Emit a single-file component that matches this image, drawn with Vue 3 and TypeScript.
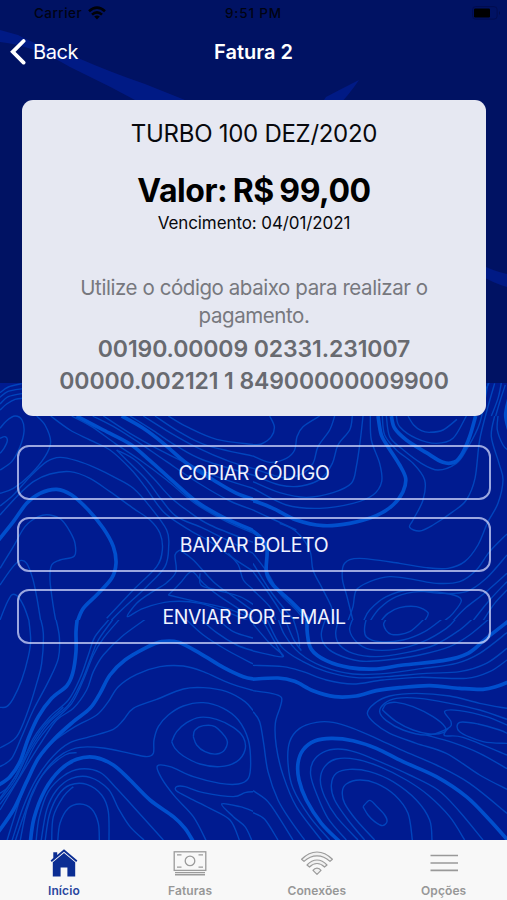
<script setup lang="ts">
interface Tile { x: number; y: number; top: number; w: number; thin: string[]; thick: string[] }

/* Contour lines of the topographic backdrop, as point lists on a 3x grid. */
const tiles: Tile[] = [
  {
    x: 0, y: 400, top: -51, w: 759,
    thin: [
      '0,-22 25,-39 65,-49', '0,-8 24,-26 68,-34', '0,12 25,-10 70,-20', '0,30 20,12 45,-2 75,-6',
      '0,85 20,62 45,48 66,60 72,95 60,140 35,185 0,210',
      '0,115 15,110 22,122 12,145 0,160',
      '110,48 135,75 152,125 135,170 90,225 40,265 0,280',
      '152,48 210,90 270,120 330,150 390,205 435,260 490,335 560,385 630,425 700,475 762,515',
      '350,150 405,180 460,235 510,290 560,330 630,375 762,428',
      '350,150 390,190 440,240 485,300 530,350 610,385 700,430 762,461',
      '0,318 40,285 90,230 140,185 180,172 230,182 290,205 350,235 400,265 450,320 500,390 506,440 495,500 440,560 370,625 330,665',
      '0,345 50,290 100,245 150,222 210,215 270,235 330,275 400,325 450,360 480,400 487,450 470,500 400,570 320,655',
      '0,505 40,440 75,380 115,350 150,345 185,360 210,395 225,430 223,468 180,480 155,495 150,540 160,620 168,665',
      '0,555 35,505 60,482 80,490 98,535 110,590 122,662',
      '0,660 18,615 35,585 52,588 72,620 88,665',
      '215,48 275,80 345,130 420,180 500,240 585,310 680,365 762,400',
      '278,48 350,85 420,130 500,185 600,252 690,303 762,331',
      '310,48 390,100 470,145 560,190 650,230 762,266',
      '390,48 460,92 530,138 610,180 762,226',
      '430,48 510,98 590,142 690,185 762,206',
      '465,48 540,97 620,136 762,169',
      '505,48 560,80 650,118 762,134',
      '540,450 525,465 528,515 500,548 450,580 410,610 382,650 430,625 510,605 600,610 690,640 762,670',
      '540,450 580,480 640,545 700,590 762,635',
      '505,585 540,550 575,515 610,550 660,590 762,655',
      '505,585 590,605 680,625 762,658',
      '600,520 603,555 650,570 720,590 762,615',
      '685,460 715,495 730,540 762,570',
    ],
    thick: [
      '-8,424 0,415 40,365 80,310 120,280 170,268 215,285 265,330 310,385 340,440 348,490 335,535 290,585 250,625 232,665',
      '230,48 310,90 390,132 450,182 520,245 590,305 670,352 768,395',
      '365,48 430,85 490,130 560,190 640,240 710,280 768,300',
    ],
  },
  {
    x: 253, y: 400, top: -51, w: 762,
    thin: [
      '50,48 64,80 55,110 25,132 0,134',
      '200,48 150,80 132,110 125,150 100,175 50,187 0,168',
      '245,48 230,90 195,140 180,190 145,222 90,233 0,205',
      '298,48 290,90 255,135 238,190 205,235 145,258 80,255 0,225',
      '330,48 322,120 310,200 295,250 240,278 160,292 80,278 0,245',
      '352,48 355,120 380,190 386,245 360,285 300,310 200,325 100,315 0,265',
      '388,48 395,105 430,150 480,190 515,240 510,300 480,360 470,382 500,393 540,375 600,335 640,300 666,235 680,120 705,20 725,-50',
      '400,48 410,110 445,145 505,190 555,210 610,190 640,150 680,70 705,-50',
      '430,48 440,80 490,115 550,130 600,115 640,48',
      '465,48 482,75 505,92 530,97 570,90 612,58',
      '725,48 715,110 738,190 750,240 735,310 705,365 675,435 635,485 585,505 520,503 440,490 320,475 275,490 268,535 282,590 300,662',
      '735,48 733,90 750,135 765,150',
      '762,402 710,455 670,510 620,545 550,550 480,538 410,530 350,545 310,570 300,620 285,662',
      '762,465 700,535 640,575 560,580 470,570 400,590 350,630 332,662',
      '762,520 700,575 640,622 600,662',
      '762,545 710,600 660,662', '762,570 725,610 690,662',
      '350,665 380,625 430,590 500,575 590,582 625,600 600,640 575,662',
      '382,665 405,640 440,623 490,620 525,638 515,662',
      '80,370 130,395 170,450 180,510 205,560 235,620 245,662',
      '0,330 65,360 130,390',
      '0,460 45,520 80,580 130,630 160,670', '0,490 50,570 105,640 130,665', '0,515 40,570 85,640 90,665', '0,570 50,620 70,665',
      '672,-20 690,-51', '683,0 708,-51', '715,48 735,-5 745,-51', '728,48 742,0 757,-45',
    ],
    thick: [
      '-4,300 60,325 130,360 210,377 290,370 370,347 420,315 450,275 458,235 440,195 405,140 385,105 375,48',
      '415,48 425,85 460,120 520,158 570,187 605,186 628,160 650,110 668,48',
      '-5,390 25,415 42,450 40,515 60,555 110,600 150,640 180,672',
      '768,-5 758,45 768,92',
    ],
  },
  {
    x: 0, y: 620, top: 0, w: 759,
    thin: [
      '86,-5 92,60 85,110 65,180 40,235 20,260 0,262',
      '120,-10 130,40 125,130 110,190 85,270 50,350 0,384',
      '166,-10 178,50 175,115 145,185 100,270 65,350 35,415 0,440',
      '330,-5 285,50 265,105 240,175 205,240 150,290 100,355 65,435 25,500 0,520',
      '345,-10 295,60 270,120 242,190 205,255 145,310 90,390 45,480 0,540',
      '365,-10 310,55 280,105 250,180 215,250 155,310 105,375 55,475 0,553',
      '440,-5 365,50 310,105 280,155 260,210 220,265 170,300 125,365 75,445 0,570',
      '190,262 130,320 85,390 48,465 0,535',
      '762,212 690,190 610,155 550,138 480,140 410,163 355,200 325,245 290,285 225,320 160,365 120,410 75,495 20,665',
      '762,275 735,245 680,215 610,203 550,207 470,238 400,265 370,300 340,328 270,350 210,368 160,408 110,475 70,560 35,665',
      '60,665 80,570 110,495 145,440 190,400 240,382 310,384 390,400 440,410 460,400 462,360 475,320 505,285 550,258 610,248 670,265 715,300 745,360 752,430 745,475 715,492 660,490 580,470 510,440 472,438 485,475 525,530 580,590 620,665',
      '515,365 530,335 560,308 600,292 650,298 700,322 730,352 735,390 710,425 660,440 600,432 550,408 525,385 515,365',
      '580,350 585,330 610,317 645,320 680,358 675,388 650,402 615,395 590,375 580,350',
      '45,665 70,590 100,510 140,450 195,405 230,398',
      '108,665 118,590 145,515 190,468 240,447 300,457 345,500 400,560 490,660',
      '123,665 140,570 170,510 215,475 270,472 325,508 355,565 390,620 432,660',
      '135,665 148,585 175,525 210,495 260,493 305,525 325,575 327,665',
      '155,665 160,590 190,530 220,500',
      '173,665 180,610 205,565 240,552 275,567 295,610 298,665',
      '762,515 735,518 700,530 610,518 555,500 530,500 530,513 570,535 630,565 690,600 718,660',
      '762,575 720,560 665,552 700,590 735,620 755,660',
      '555,-5 610,45 680,90 762,133', '600,-5 650,38 710,75 762,93', '650,-5 700,35 762,55',
    ],
    thick: [
      '232,-5 228,35 228,95 218,160 200,198 155,235 115,290 85,355 60,425 30,470 -8,498',
      '768,178 730,170 670,142 600,100 535,67 485,65 440,82 375,120 330,165 300,220 270,265 220,305 165,355 115,415 80,485 40,570 -8,640',
      '90,675 102,595 135,510 180,450 230,418 285,412 340,435 390,480 450,540 520,590 555,625 580,665',
    ],
  },
  {
    x: 253, y: 620, top: 0, w: 762,
    thin: [
      '0,12 50,70 90,110 0,93', '25,-5 65,65 90,110',
      '40,-5 85,80 150,125 220,155 310,173 400,170 520,160 620,155 700,130 762,85',
      '75,-5 95,45 140,100 210,140 300,162 400,160 510,145 610,130 680,100 762,38',
      '95,-5 120,55 145,92', '120,-5 135,45 140,80',
      '0,136 90,140 150,155 220,180 300,192 390,180 500,172 640,175 710,155 762,120',
      '220,-10 205,40 215,75 250,102 320,123 400,120 500,105 590,80 650,45 710,-5',
      '258,-5 248,40 260,75 300,100 370,110 460,98 545,75 620,30 660,-5',
      '300,-5 290,30 310,65 350,88 430,88 510,65 580,25 610,-5',
      '345,-20 335,20 340,50 380,65 450,60 515,35 570,-5',
      '405,-10 392,15 415,43 470,35 520,-10',
      '0,212 55,220 85,232 82,260 67,310 70,380 90,465 130,560 205,660',
      '0,275 20,305 32,370 45,455 75,540 115,605 155,660',
      '0,512 40,540 70,580 120,660', '0,578 35,598 75,660',
      '230,660 170,590 120,505 105,430 110,365 140,325 190,307 240,307 300,325 370,355 450,392 550,435 650,490 762,580',
      '280,660 225,595 190,520 173,465 180,425 210,397 255,387 310,397 380,425 470,465 555,510 620,575 690,660',
      '315,660 250,590 215,530 202,480 215,440 250,417 310,418 380,440 460,480 525,525 590,590 635,660',
      '335,660 285,600 245,540 235,495 250,460 290,448 350,455 420,485 490,540 530,600 537,660',
      '365,660 310,600 275,550 268,515 280,492 320,480 370,490 425,525 465,580 478,660',
      '330,560 350,541 370,558 395,585 402,605 388,617 365,605 345,585 330,560',
      '388,270 400,252 430,247 480,260 540,290 577,322 570,338 530,342 480,330 430,305 388,270',
      '762,298 680,270 590,250 500,235 430,235 395,250 380,275 400,302 450,330 520,345 585,325 594,305 575,274 620,272 700,290 762,315',
      '762,265 680,250 590,228 490,220 410,228 365,250 343,280 365,310 410,340 490,370 580,400 680,465 762,508',
      '585,325 575,347 630,352 762,405', '520,345 600,368 680,400 762,446',
      '762,370 690,365 620,335 620,307 675,312 740,330 762,340',
    ],
    thick: [
      '162,-8 163,40 175,88 220,122 290,143 370,147 450,135 570,122 645,100 700,55 768,2',
      '-8,178 75,174 125,184 180,212 245,230 310,228 370,212 440,203 530,197 620,205 690,208 735,198 768,185',
      '260,665 205,610 160,540 138,480 135,430 150,390 185,363 235,355 300,362 370,385 450,425 550,470 640,530 710,600 768,665',
    ],
  },
]

/* Smooth (Catmull-Rom) curve through a list of points. */
function curve(line: string): string {
  const p = line.split(' ').map((s) => s.split(',').map(Number))
  let d = `M${p[0][0]} ${p[0][1]}`
  for (let i = 0; i < p.length - 1; i++) {
    const a = p[Math.max(0, i - 1)], b = p[i], c = p[i + 1], e = p[Math.min(p.length - 1, i + 2)]
    const q = [b[0] + (c[0] - a[0]) / 6, b[1] + (c[1] - a[1]) / 6, c[0] - (e[0] - b[0]) / 6, c[1] - (e[1] - b[1]) / 6]
    d += `C${q.map((n) => n.toFixed(1)).join(' ')} ${c[0]} ${c[1]}`
  }
  return d
}

const actions: string[] = ['COPIAR CÓDIGO', 'BAIXAR BOLETO', 'ENVIAR POR E-MAIL']
const tabs = [
  { id: 'home', label: 'Início' },
  { id: 'bills', label: 'Faturas' },
  { id: 'wifi', label: 'Conexões' },
  { id: 'menu', label: 'Opções' },
]
</script>

<template>
  <div class="screen">
    <svg class="backdrop" viewBox="0 0 507 900" aria-hidden="true">
      <rect width="507" height="384" fill="#001263" />
      <path d="M0 30L18 35Q38 46 78 58Q110 72 145 84Q175 96 205 108H150Q110 86 70 67Q35 46 0 42Z" fill="#001a85" />
      <path d="M359 80Q345 87 326 97L320 106H338Q348 96 359 80Z" fill="#001a85" />
      <path d="M480 264Q493 271 507 274V287Q493 283 480 275Z" fill="#001a85" />
      <rect y="383" width="507" height="517" fill="#001b90" />
      <svg
        v-for="(t, i) in tiles" :key="i" :x="t.x" :y="t.y + t.top / 3" :width="t.w / 3" :height="(660 - t.top) / 3"
        :viewBox="`0 ${t.top} ${t.w} ${660 - t.top}`"
      >
        <path v-for="(l, j) in t.thin" :key="j" :d="curve(l)" class="thin" />
        <path v-for="(l, j) in t.thick" :key="'k' + j" :d="curve(l)" class="thick" />
      </svg>
    </svg>

    <div class="status">
      <div class="carrier">
        <span>Carrier</span>
        <svg width="18" height="14" viewBox="0 0 18 14" fill="none" stroke="#000208" stroke-width="2.6">
          <path d="M1 5.2Q9-2 17 5.2" /><path d="M4 8.6Q9 4 14 8.6" /><path d="M9 13.4L6.2 10.6Q9 8.5 11.8 10.6Z" fill="#000208" stroke="none" />
        </svg>
      </div>
      <span class="time">9:51 PM</span>
      <svg class="battery" width="29" height="14" viewBox="0 0 29 14">
        <rect x=".6" y=".6" width="24.5" height="12.5" rx="3" fill="none" stroke="#000d50" />
        <rect x="2" y="2.4" width="16" height="9" rx="1.2" fill="#000" /><path d="M27 5Q29 7 27 9Z" fill="#000c48" />
      </svg>
    </div>

    <header class="nav">
      <div class="back">
        <svg width="16" height="26" viewBox="0 0 16 26"><path d="M13.6 2L2.8 12.8L13.6 23.6" fill="none" stroke="#fff" stroke-width="3.8" stroke-linecap="round" /></svg>
        <span>Back</span>
      </div>
      <h1>Fatura 2</h1>
    </header>

    <section class="card">
      <p class="plan">TURBO 100 DEZ/2020</p>
      <p class="value">Valor: R$ 99,00</p>
      <p class="due">Vencimento: 04/01/2021</p>
      <p class="hint">Utilize o código abaixo para realizar o<br />pagamento.</p>
      <p class="code">00190.00009 02331.231007<br />00000.002121 1 84900000009900</p>
    </section>

    <div class="actions">
      <button v-for="a in actions" :key="a" type="button">{{ a }}</button>
    </div>

    <nav class="tabs">
      <div v-for="t in tabs" :key="t.id" class="tab" :class="{ active: t.id === 'home' }">
        <svg v-if="t.id === 'home'" width="30" height="30" viewBox="0 0 30 30" fill="#0b2d93">
          <path d="M4.3 4.2H8.2V7L15 1.2L28.4 12.4L27.2 13.9L15 3.8L2.8 13.9L1.6 12.4L4.3 10.1Z" />
          <path d="M15 5L26.2 14.2V28.6H18.4V19.4H11.6V28.6H3.8V14.2Z" />
        </svg>
        <svg v-else-if="t.id === 'bills'" width="36" height="30" viewBox="0 0 36 30" fill="none" stroke="#9b9b9b" stroke-width="1.3">
          <rect x="2.2" y="3.8" width="31.6" height="18.6" /><circle cx="18" cy="12.9" r="4.8" />
          <path d="M5 6.8H9.5M26.5 6.8H31M5 19.2H9.5M26.5 19.2H31" />
          <path d="M3 24.6H33M3 26.8H33" stroke-width="1.4" />
        </svg>
        <svg v-else-if="t.id === 'wifi'" width="34" height="30" viewBox="0 0 34 30" fill="#f1f1f1" stroke="#9b9b9b" stroke-width="1.2" stroke-linejoin="round">
          <path d="M1.6 11.2Q9 4 17 4Q25 4 32.4 11.2L30 13.4Q24 7.8 17 7.8Q10 7.8 4 13.4Z" />
          <path d="M7 17Q11.5 12 17 12Q22.5 12 27 17L24.5 19Q21 15.5 17 15.5Q13 15.5 9.5 19Z" />
          <path d="M17 26.4L13 22.4Q14.5 20.1 17 20.1Q19.5 20.1 21 22.4Z" />
        </svg>
        <svg v-else width="30" height="30" viewBox="0 0 30 30"><path d="M1.5 7.5H29M1.5 15H29M1.5 22.4H29" stroke="#999" stroke-width="1.6" /></svg>
        <span>{{ t.label }}</span>
      </div>
    </nav>
  </div>
</template>

<style>
body { margin: 0; background: #001b90; }
</style>

<style scoped>
.screen {
  position: relative; width: 507px; height: 900px; overflow: hidden;
  display: flex; flex-direction: column;
  font-family: Inter, "Liberation Sans", sans-serif; color: #fff;
}
.backdrop { position: absolute; inset: 0; width: 507px; height: 900px; z-index: 0; }
.thin { fill: none; stroke: #0045bd; stroke-width: 4.2; }
.thick { fill: none; stroke: #004fcd; stroke-width: 11; }
.status, .nav, .card, .actions, .tabs { position: relative; z-index: 1; box-sizing: border-box; flex: none; }
p, h1 { margin: 0; white-space: nowrap; }
.status {
  height: 26px; padding: 0 6px 0 34px; display: grid; grid-template-columns: 1fr auto 1fr;
  align-items: center; color: #000312; font-size: 13.5px; font-weight: 500;
}
.carrier { display: flex; align-items: center; gap: 6px; letter-spacing: .45px; }
.time { margin-right: 28px; letter-spacing: .85px; }
.battery { justify-self: end; }
.nav { height: 52px; display: grid; grid-template-columns: 1fr auto 1fr; align-items: center; padding: 0 10px; }
.back { display: flex; align-items: center; gap: 7px; font-size: 20px; letter-spacing: -.45px; }
.nav h1 { font-size: 20px; font-weight: 600; }
.card {
  margin: 22px 21px 0 22px; height: 316px; padding-top: 17px; border-radius: 11px;
  background: #e6e8f2; color: #08090d; text-align: center;
}
.plan { font-size: 24px; line-height: 34px; letter-spacing: -.28px; }
.value { margin-top: 20px; font-size: 32px; font-weight: 700; line-height: 40px; letter-spacing: -.45px; word-spacing: -1.6px; color: #000; }
.due { font-size: 17px; line-height: 24px; letter-spacing: -.1px; }
.hint { margin-top: 39px; font-size: 20.5px; line-height: 28px; letter-spacing: -.43px; color: #77787e; }
.code { margin-top: 3px; font-size: 23px; font-weight: 600; line-height: 32px; letter-spacing: -.1px; color: #686a70; }
.actions { margin: 29px 16px 0 17px; display: flex; flex-direction: column; gap: 17px; }
button {
  height: 55px; padding: 3px 0 0; border: 2px solid rgba(215, 222, 255, .72); border-radius: 12px; background: transparent;
  color: #f0f3ff; font: 400 19.5px/1 Inter, "Liberation Sans", sans-serif; letter-spacing: -.4px;
}
.tabs { margin-top: auto; height: 60px; display: grid; grid-template-columns: repeat(4, 1fr); background: #f8f8f8; }
.tab {
  display: flex; flex-direction: column; align-items: center; padding-top: 8px; gap: 5px;
  color: #979797; font-size: 12px; font-weight: 600; line-height: 16px; letter-spacing: .1px;
}
.active { color: #2a469e; padding-left: 1px; }
</style>
